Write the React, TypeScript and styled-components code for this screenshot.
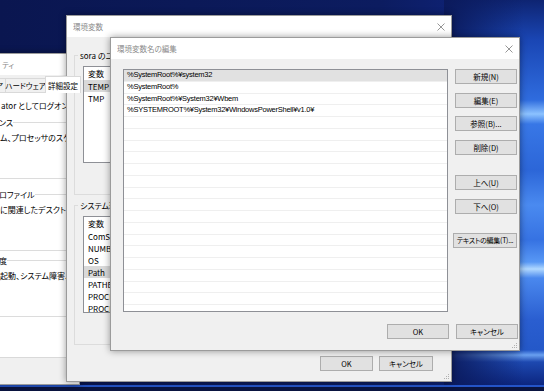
import React from 'react'
import styled, { createGlobalStyle } from 'styled-components'

const GlobalStyle = createGlobalStyle`
  html, body {
    margin: 0;
    padding: 0;
    background: #0b1a5c;
  }
`

const Desktop = styled.div`
  position: relative;
  width: 544px;
  height: 391px;
  overflow: hidden;
  display: flex;
  flex-direction: column;
  font-family: 'Noto Sans CJK JP', 'Noto Sans', sans-serif;
  font-size: 8px;
  line-height: 11px;
  color: #000;
  font-feature-settings: 'palt';
`

const Wallpaper = styled.div`
  flex: 1;
  background:
    linear-gradient(90deg, #0b1a5c 0px, rgba(11, 26, 92, 0) 80px) right top / 100px 100% no-repeat,
    linear-gradient(
        180deg,
        #0e2472 0px,
        #1a46b4 40px,
        #2f6cde 100px,
        #8cc2ff 114px,
        #3877e6 124px,
        #2c66d8 170px,
        #4a8af0 205px,
        #3672e2 240px,
        #5898f5 262px,
        #b0d8ff 269px,
        #4a88ee 278px,
        #2a5ed0 320px,
        #2458c8 350px,
        #6aa0f0 355px,
        #1d48b0 362px,
        #0c2680 385px
      )
      right top / 100px 100% no-repeat,
    linear-gradient(90deg, #0a1650 0%, #0c1c60 70%, #10288a 100%);
`

const Taskbar = styled.div`
  height: 4px;
  border-top: 2px solid #2454c8;
  background: #0a1440;
`

// windows sit on the desktop at their own coordinates
const Window = styled.div<{ $x: number; $y: number; $w: number; $h: number }>`
  position: absolute;
  left: ${(p) => p.$x}px;
  top: ${(p) => p.$y}px;
  width: ${(p) => p.$w}px;
  height: ${(p) => p.$h}px;
  box-sizing: border-box;
  display: flex;
  flex-direction: column;
  background: #f0f0f0;
  border: 1px solid #9b9b9b;
  box-shadow: 0 0 7px rgba(0, 0, 0, 0.4);
`

const TitleBar = styled.div<{ $pad?: number }>`
  flex: none;
  height: 21px;
  display: flex;
  align-items: center;
  padding-left: ${(p) => p.$pad ?? 6}px;
  background: #fff;
  color: #8a8a8a;
  font-size: 7.5px;
`

const TitleText = styled.span`
  flex: 1;
  white-space: nowrap;
  overflow: hidden;
`

const CloseBox = styled.div`
  width: 20px;
  height: 21px;
  display: flex;
  align-items: center;
  justify-content: center;
`

const Grip = styled.svg`
  position: absolute;
  right: 1px;
  bottom: 1px;
`

const Button = styled.button<{ $w: number; $shift?: number; $gap?: number; $small?: boolean }>`
  flex: none;
  width: ${(p) => p.$w}px;
  height: 15px;
  margin: ${(p) => p.$gap ?? 0}px 0 0 ${(p) => p.$shift ?? 0}px;
  padding: 0;
  box-sizing: border-box;
  display: flex;
  align-items: center;
  justify-content: center;
  background: #e1e1e1;
  border: 1px solid #adadad;
  font: inherit;
  font-size: ${(p) => (p.$small ? 7 : 7.5)}px;
  letter-spacing: ${(p) => (p.$small ? -0.25 : 0)}px;
  color: #000;
  white-space: nowrap;
`

/* ---------- システムのプロパティ (behind) ---------- */

const SysBody = styled.div`
  flex: 1;
  display: flex;
  flex-direction: column;
  padding-top: 1px;
`

const TabStrip = styled.div`
  height: 17px;
  display: flex;
  align-items: flex-end;
  padding-left: 8px;
`

const Tab = styled.div<{ $active?: boolean; $w: number; $align?: string }>`
  flex: none;
  width: ${(p) => p.$w}px;
  height: ${(p) => (p.$active ? 17 : 15)}px;
  box-sizing: border-box;
  display: flex;
  align-items: center;
  justify-content: ${(p) => p.$align ?? 'center'};
  padding: 0 2px;
  background: ${(p) => (p.$active ? '#fff' : '#f0f0f0')};
  border: 1px solid #d9d9d9;
  border-bottom: ${(p) => (p.$active ? 'none' : '1px solid #d9d9d9')};
  margin-left: -1px;
  position: relative;
  z-index: ${(p) => (p.$active ? 1 : 0)};
  font-size: 7.5px;
  white-space: nowrap;
`

const TabPage = styled.div`
  height: 266px;
  margin: -1px 6px 0 6px;
  padding: 6.5px 0 0 6px;
  box-sizing: border-box;
  background: #fff;
  border: 1px solid #d9d9d9;
`

const IntroText = styled.div`
  padding-left: 7px;
  white-space: nowrap;
`

const SysGroup = styled.fieldset<{ $mt: number }>`
  margin: ${(p) => p.$mt}px 0 0 0;
  padding: 4px 6px 35px 6px;
  border: 1px solid #dcdcdc;
  border-left: none;
  min-width: 0;
`

const SysLegend = styled.legend`
  padding: 0;
  margin-left: -1px;
  white-space: nowrap;
`

const GroupText = styled.div`
  white-space: nowrap;
`

const SysFooter = styled.div`
  flex: 1;
`

/* ---------- 環境変数 (middle) ---------- */

const EnvBody = styled.div`
  flex: 1;
  display: flex;
  flex-direction: column;
  padding: 12.5px 7px 0 7px;
`

const Group = styled.fieldset<{ $mt?: number }>`
  margin: ${(p) => p.$mt ?? 0}px 0 0 0;
  padding: 5px 8px 8px 8px;
  border: 1px solid #dcdcdc;
  min-width: 0;
`

const Legend = styled.legend`
  margin-left: -5px;
  padding: 0 2px;
  white-space: nowrap;
`

const ListBox = styled.div`
  height: 97px;
  box-sizing: border-box;
  background: #fff;
  border: 1px solid #8e9096;
  overflow: hidden;
`

const VarHead = styled.div`
  display: grid;
  grid-template-columns: 110px 1fr;
  height: 13.5px;
  align-items: center;
`

const VarRow = styled.div<{ $selected?: boolean }>`
  display: grid;
  grid-template-columns: 110px 1fr;
  height: 12px;
  align-items: center;
  background: ${(p) => (p.$selected ? '#d9d9d9' : 'transparent')};
`

const Cell = styled.div`
  padding-left: 4px;
  white-space: nowrap;
  overflow: hidden;
`

const ButtonRow = styled.div<{ $mt: number; $pr?: number }>`
  display: flex;
  justify-content: flex-end;
  gap: 6px;
  margin-top: ${(p) => p.$mt}px;
  padding-right: ${(p) => p.$pr ?? 0}px;
`

/* ---------- 環境変数名の編集 (front) ---------- */

const EditBody = styled.div`
  flex: 1;
  display: flex;
  flex-direction: column;
  padding: 10px 1px 11px 12px;
`

const EditMain = styled.div`
  display: flex;
  gap: 7px;
  height: 243px;
`

const PathList = styled.div`
  width: 325px;
  height: 243px;
  box-sizing: border-box;
  border: 1px solid #8e9096;
  background: #fff;
  overflow: hidden;
`

const PathRow = styled.div<{ $selected?: boolean }>`
  height: 11.75px;
  box-sizing: border-box;
  padding-left: 3px;
  border-bottom: 1px solid #efefef;
  line-height: 10.75px;
  font-family: 'Liberation Sans', 'Noto Sans CJK JP', sans-serif;
  font-size: 7.5px;
  letter-spacing: -0.25px;
  white-space: nowrap;
  background: ${(p) => (p.$selected ? '#e1e1e1' : '#fff')};
`

const SideButtons = styled.div`
  width: 63px;
  display: flex;
  flex-direction: column;
  gap: 8.5px;
`

const EditFooter = styled.div`
  display: flex;
  justify-content: flex-end;
  gap: 7px;
  margin-top: 12px;
`

const CloseIcon = () => (
  <svg width="8" height="8" viewBox="0 0 8 8">
    <path d="M0.5 0.5L7.5 7.5M7.5 0.5L0.5 7.5" stroke="#8a8a8a" strokeWidth="0.9" fill="none" />
  </svg>
)

const ResizeGrip = () => (
  <Grip width="7" height="7" viewBox="0 0 7 7">
    {[
      [5, 1],
      [3, 3],
      [5, 3],
      [1, 5],
      [3, 5],
      [5, 5],
    ].map(([x, y]) => (
      <rect key={`${x}-${y}`} x={x} y={y} width="1" height="1" fill="#b0b0b0" />
    ))}
  </Grip>
)

const userVars = [
  { name: 'TEMP', value: '%USERPROFILE%¥AppData¥Local¥Temp', selected: true },
  { name: 'TMP', value: '%USERPROFILE%¥AppData¥Local¥Temp' },
]

const systemVars = [
  { name: 'ComSpec', value: '%SystemRoot%¥system32¥cmd.exe' },
  { name: 'NUMBER_OF_PROCESSORS', value: '4' },
  { name: 'OS', value: 'Windows_NT' },
  { name: 'Path', value: '%SystemRoot%¥system32;%SystemRoot%;', selected: true },
  { name: 'PATHEXT', value: '.COM;.EXE;.BAT;.CMD;.VBS;.VBE;.JS;.JSE;.WSF;.WSH;.MSC' },
  { name: 'PROCESSOR_ARCHITECTURE', value: 'AMD64' },
  { name: 'PROCESSOR_IDENTIFIER', value: 'Intel64 Family 6 Model 58 Stepping 9, GenuineIntel' },
]

const paths = [
  '%SystemRoot%¥system32',
  '%SystemRoot%',
  '%SystemRoot%¥System32¥Wbem',
  '%SYSTEMROOT%¥System32¥WindowsPowerShell¥v1.0¥',
]

const EMPTY_ROWS = 17

export default function App() {
  return (
    <Desktop>
      <GlobalStyle />
      <Wallpaper />
      <Taskbar />

      <Window $x={-20} $y={53} $w={100} $h={332}>
        <TitleBar $pad={21}>
          <TitleText>ティ</TitleText>
        </TitleBar>
        <SysBody>
          <TabStrip>
            <Tab $w={18} $align="flex-end">
              ア
            </Tab>
            <Tab $w={41}>ハードウェア</Tab>
            <Tab $w={36} $active>
              詳細設定
            </Tab>
          </TabStrip>
          <TabPage>
            <IntroText>ator としてログオンしない場合は、これらのほとんどは変更できません。</IntroText>
            <SysGroup $mt={6}>
              <SysLegend>ンス</SysLegend>
              <GroupText>ム、プロセッサのスケジュール、メモリ使用、および仮想メモリ</GroupText>
            </SysGroup>
            <SysGroup $mt={10.5}>
              <SysLegend>ロファイル</SysLegend>
              <GroupText>に関連したデスクトップ設定</GroupText>
            </SysGroup>
            <SysGroup $mt={4}>
              <SysLegend>度</SysLegend>
              <GroupText>起動、システム障害、およびデバッグ情報</GroupText>
            </SysGroup>
          </TabPage>
          <SysFooter />
        </SysBody>
      </Window>

      <Window $x={66} $y={15} $w={386} $h={367}>
        <TitleBar>
          <TitleText>環境変数</TitleText>
          <CloseBox>
            <CloseIcon />
          </CloseBox>
        </TitleBar>
        <EnvBody>
          <Group>
            <Legend>sora のユーザー環境変数(U)</Legend>
            <ListBox>
              <VarHead>
                <Cell>変数</Cell>
                <Cell>値</Cell>
              </VarHead>
              {userVars.map((v) => (
                <VarRow key={v.name} $selected={v.selected}>
                  <Cell>{v.name}</Cell>
                  <Cell>{v.value}</Cell>
                </VarRow>
              ))}
            </ListBox>
            <ButtonRow $mt={8}>
              <Button $w={62}>新規(N)...</Button>
              <Button $w={62}>編集(E)...</Button>
              <Button $w={62}>削除(D)</Button>
            </ButtonRow>
          </Group>
          <Group $mt={5}>
            <Legend>システム環境変数(S)</Legend>
            <ListBox>
              <VarHead>
                <Cell>変数</Cell>
                <Cell>値</Cell>
              </VarHead>
              {systemVars.map((v) => (
                <VarRow key={v.name} $selected={v.selected}>
                  <Cell>{v.name}</Cell>
                  <Cell>{v.value}</Cell>
                </VarRow>
              ))}
            </ListBox>
            <ButtonRow $mt={8}>
              <Button $w={62}>新規(W)...</Button>
              <Button $w={62}>編集(I)...</Button>
              <Button $w={62}>削除(L)</Button>
            </ButtonRow>
          </Group>
          <ButtonRow $mt={11.5} $pr={11}>
            <Button $w={53}>OK</Button>
            <Button $w={54}>キャンセル</Button>
          </ButtonRow>
        </EnvBody>
        <ResizeGrip />
      </Window>

      <Window $x={110} $y={37} $w={410} $h={314}>
        <TitleBar>
          <TitleText>環境変数名の編集</TitleText>
          <CloseBox>
            <CloseIcon />
          </CloseBox>
        </TitleBar>
        <EditBody>
          <EditMain>
            <PathList>
              {paths.map((p, i) => (
                <PathRow key={p} $selected={i === 0}>
                  {p}
                </PathRow>
              ))}
              {Array.from({ length: EMPTY_ROWS }, (_, i) => (
                <PathRow key={`empty-${i}`} />
              ))}
            </PathList>
            <SideButtons>
              <Button $w={62}>新規(N)</Button>
              <Button $w={62}>編集(E)</Button>
              <Button $w={62}>参照(B)...</Button>
              <Button $w={62}>削除(D)</Button>
              <Button $w={62} $gap={12}>
                上へ(U)
              </Button>
              <Button $w={62}>下へ(O)</Button>
              <Button $w={64} $shift={-2} $gap={11} $small>
                テキストの編集(T)...
              </Button>
            </SideButtons>
          </EditMain>
          <EditFooter>
            <Button $w={62}>OK</Button>
            <Button $w={62}>キャンセル</Button>
          </EditFooter>
        </EditBody>
        <ResizeGrip />
      </Window>
    </Desktop>
  )
}
